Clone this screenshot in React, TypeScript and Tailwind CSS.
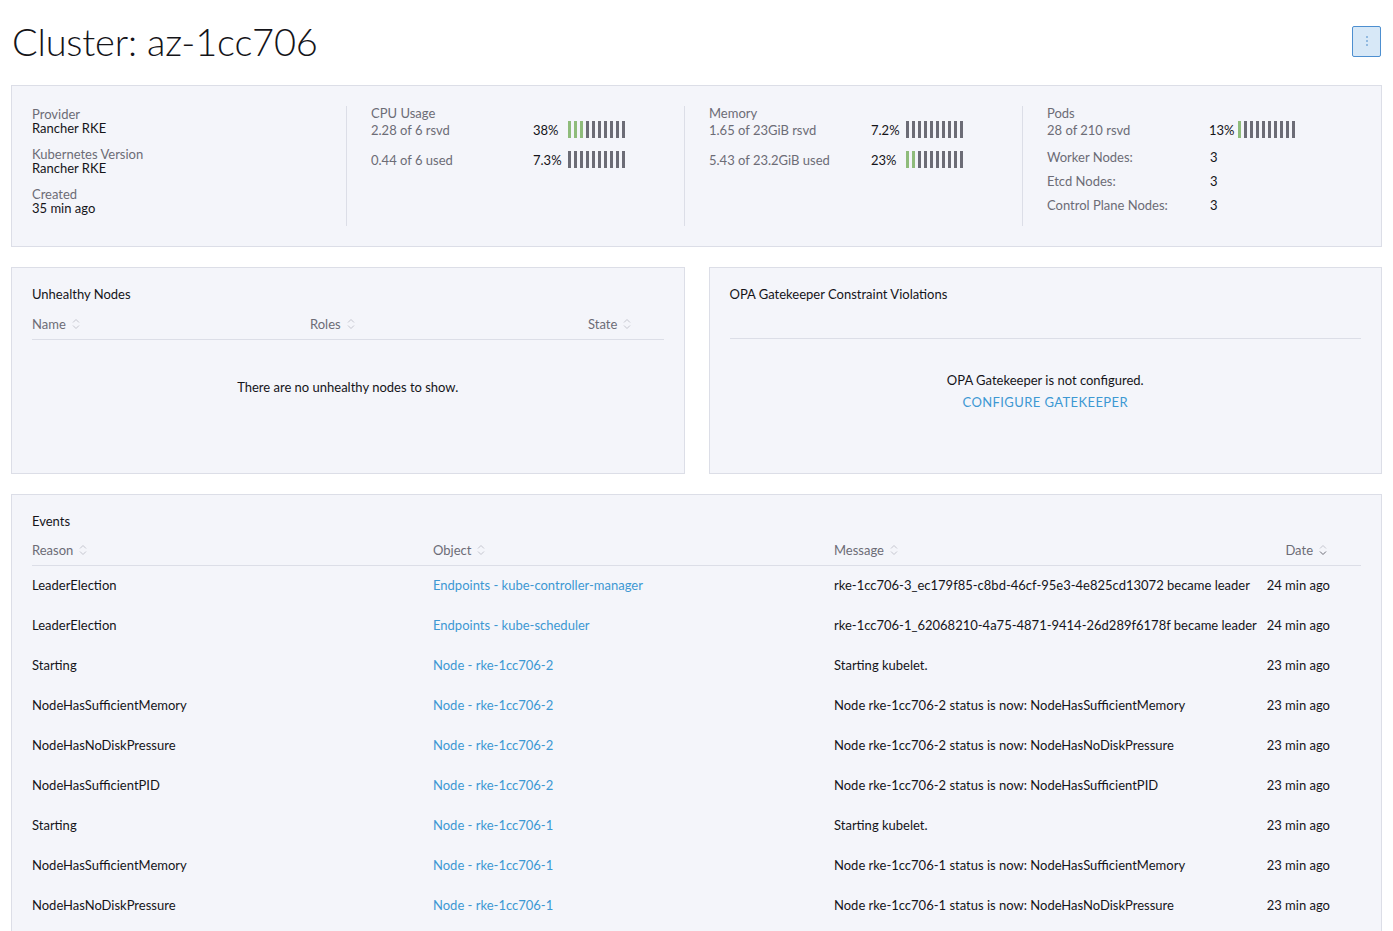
import React from "react";

const font = { fontFamily: "Lato, 'Open Sans', sans-serif" };

function SortIcon({ active = false }: { active?: boolean }) {
  return (
    <svg width="8" height="12" viewBox="0 0 8 12" className="ml-[6px] shrink-0">
      <path d="M1 4.5 L4 1.5 L7 4.5" fill="none" stroke="#c5c6cf" strokeWidth="1" />
      <path d="M1 7.5 L4 10.5 L7 7.5" fill="none" stroke={active ? "#6c6c76" : "#c5c6cf"} strokeWidth="1" />
    </svg>
  );
}

function Bars({ pct }: { pct: number }) {
  const green = Math.floor(pct / 10);
  return (
    <div className="flex gap-[3px] h-[17px]">
      {Array.from({ length: 10 }).map((_, i) => (
        <div key={i} className={`w-[3px] h-full ${i < green ? "bg-[#8fbc7b]" : "bg-[#6c6c76]"}`} />
      ))}
    </div>
  );
}

function UsageRow({ text, pct, label, pctWidth = "w-[35px]" }: { text: string; pct: number; label: string; pctWidth?: string }) {
  return (
    <div className="flex items-center">
      <span className="w-[162px] text-[#6c6c76]">{text}</span>
      <span className={`${pctWidth} text-[#141419]`}>{label}</span>
      <Bars pct={pct} />
    </div>
  );
}

const events = [
  ["LeaderElection", "Endpoints - kube-controller-manager", "rke-1cc706-3_ec179f85-c8bd-46cf-95e3-4e825cd13072 became leader", "24 min ago"],
  ["LeaderElection", "Endpoints - kube-scheduler", "rke-1cc706-1_62068210-4a75-4871-9414-26d289f6178f became leader", "24 min ago"],
  ["Starting", "Node - rke-1cc706-2", "Starting kubelet.", "23 min ago"],
  ["NodeHasSufficientMemory", "Node - rke-1cc706-2", "Node rke-1cc706-2 status is now: NodeHasSufficientMemory", "23 min ago"],
  ["NodeHasNoDiskPressure", "Node - rke-1cc706-2", "Node rke-1cc706-2 status is now: NodeHasNoDiskPressure", "23 min ago"],
  ["NodeHasSufficientPID", "Node - rke-1cc706-2", "Node rke-1cc706-2 status is now: NodeHasSufficientPID", "23 min ago"],
  ["Starting", "Node - rke-1cc706-1", "Starting kubelet.", "23 min ago"],
  ["NodeHasSufficientMemory", "Node - rke-1cc706-1", "Node rke-1cc706-1 status is now: NodeHasSufficientMemory", "23 min ago"],
  ["NodeHasNoDiskPressure", "Node - rke-1cc706-1", "Node rke-1cc706-1 status is now: NodeHasNoDiskPressure", "23 min ago"],
];

export default function App() {
  return (
    <div style={font} className="h-[931px] overflow-hidden bg-white px-[11px] pt-[14px] text-[13px] text-[#141419]">
      {/* header */}
      <div className="flex h-[54px] items-center justify-between">
        <h1 className="text-[38px] font-light leading-none tracking-[-0.2px] pl-[1px]">Cluster: az-1cc706</h1>
        <button className="mr-[1px] flex h-[31px] w-[29px] items-center justify-center rounded-[2px] border border-[#4d8fd0] bg-[#d7e8f7]">
          <svg width="2" height="10" viewBox="0 0 2 10">
            <circle cx="1" cy="1" r="0.8" fill="#3d7fc4" />
            <circle cx="1" cy="5" r="0.8" fill="#3d7fc4" />
            <circle cx="1" cy="9" r="0.8" fill="#3d7fc4" />
          </svg>
        </button>
      </div>

      {/* summary */}
      <div className="mt-[17px] flex border border-[#dcdee7] bg-[#f4f5fa] p-5 leading-[14px]">
        <div className="flex h-[120px] w-[314px] flex-col gap-3 pt-[1px]">
          <div>
            <div className="text-[#6c6c76]">Provider</div>
            <div>Rancher RKE</div>
          </div>
          <div>
            <div className="text-[#6c6c76]">Kubernetes Version</div>
            <div>Rancher RKE</div>
          </div>
          <div>
            <div className="text-[#6c6c76]">Created</div>
            <div>35 min ago</div>
          </div>
        </div>
        <div className="h-[120px] w-[338px] border-l border-[#dcdee7] pl-6">
          <div className="text-[#6c6c76]">CPU Usage</div>
          <div className="mt-[1px] flex flex-col gap-[13px]">
            <UsageRow text="2.28 of 6 rsvd" label="38%" pct={38} />
            <UsageRow text="0.44 of 6 used" label="7.3%" pct={7.3} />
          </div>
        </div>
        <div className="h-[120px] w-[338px] border-l border-[#dcdee7] pl-6">
          <div className="text-[#6c6c76]">Memory</div>
          <div className="mt-[1px] flex flex-col gap-[13px]">
            <UsageRow text="1.65 of 23GiB rsvd" label="7.2%" pct={7.2} />
            <UsageRow text="5.43 of 23.2GiB used" label="23%" pct={23} />
          </div>
        </div>
        <div className="h-[120px] w-[338px] border-l border-[#dcdee7] pl-6">
          <div className="text-[#6c6c76]">Pods</div>
          <div className="mt-[1px]">
            <UsageRow text="28 of 210 rsvd" label="13%" pct={13} pctWidth="w-[29px]" />
          </div>
          <div className="mt-[12px] flex flex-col gap-[10px]">
            {["Worker Nodes:", "Etcd Nodes:", "Control Plane Nodes:"].map((l) => (
              <div key={l} className="flex">
                <span className="w-[163px] text-[#6c6c76]">{l}</span>
                <span>3</span>
              </div>
            ))}
          </div>
        </div>
      </div>

      {/* middle cards */}
      <div className="mt-[20px] flex gap-[24px]">
        <div className="h-[207px] flex-1 border border-[#dcdee7] bg-[#f4f5fa] px-5 pt-[17px]">
          <div>Unhealthy Nodes</div>
          <div className="mt-[10px] flex h-[25px] items-start border-b border-[#dcdee7] text-[#6c6c76]">
            <div className="flex w-[278px] items-center">Name<SortIcon /></div>
            <div className="flex w-[278px] items-center">Roles<SortIcon /></div>
            <div className="flex items-center">State<SortIcon /></div>
          </div>
          <div className="pt-[38px] text-center">There are no unhealthy nodes to show.</div>
        </div>
        <div className="h-[207px] flex-1 border border-[#dcdee7] bg-[#f4f5fa] px-5 pt-[17px]">
          <div>OPA Gatekeeper Constraint Violations</div>
          <div className="mt-[33px] border-b border-[#dcdee7]" />
          <div className="pt-[32px] text-center">
            <div>OPA Gatekeeper is not configured.</div>
            <div className="mt-[3px] uppercase tracking-[0.4px] text-[#3d98d3]">Configure Gatekeeper</div>
          </div>
        </div>
      </div>

      {/* events */}
      <div className="mt-[20px] border border-[#dcdee7] bg-[#f4f5fa] px-5 pb-5 pt-[17px]">
        <div>Events</div>
        <div className="mt-[9px] flex h-[25px] items-start border-b border-[#dcdee7] text-[#6c6c76]">
          <div className="flex w-[401px] items-center">Reason<SortIcon /></div>
          <div className="flex w-[401px] items-center">Object<SortIcon /></div>
          <div className="flex w-[418px] items-center">Message<SortIcon /></div>
          <div className="flex flex-1 items-center justify-end pr-[34px]">Date<SortIcon active /></div>
        </div>
        {events.map(([reason, obj, msg, date], i) => (
          <div key={i} className="flex h-[40px] items-center">
            <div className="w-[401px]">{reason}</div>
            <div className="w-[401px] text-[#3d98d3]">{obj}</div>
            <div className="w-[418px] whitespace-nowrap">{msg}</div>
            <div className="flex-1 text-right pr-[31px]">{date}</div>
          </div>
        ))}
      </div>
    </div>
  );
}
